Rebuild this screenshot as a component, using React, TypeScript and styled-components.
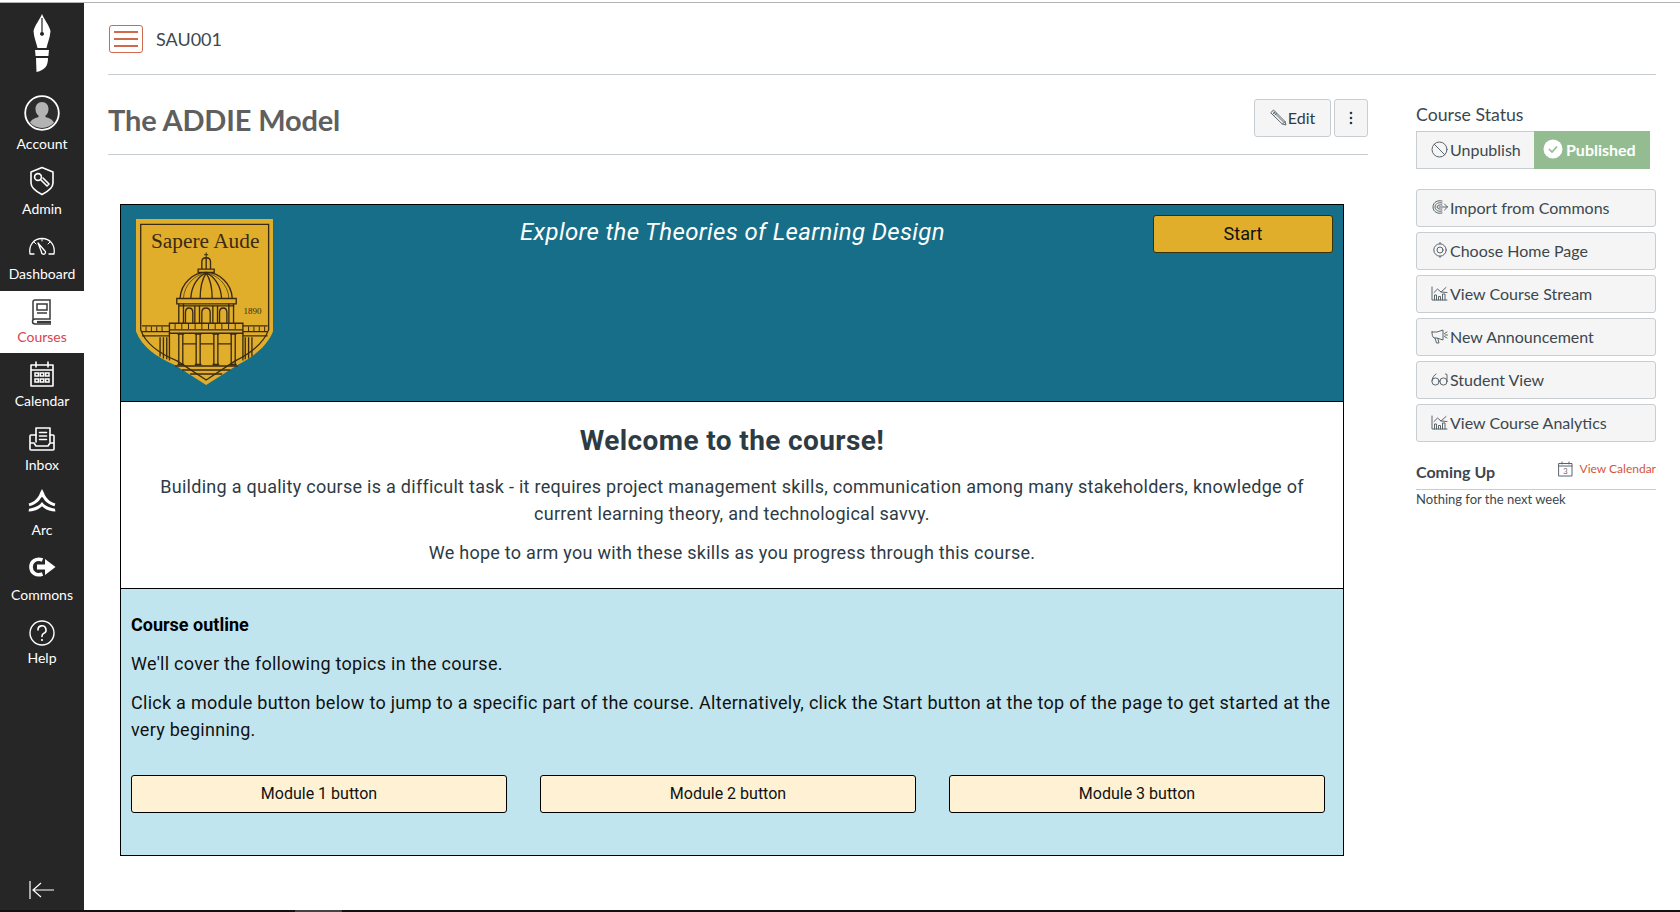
import React from "react";
import styled, { createGlobalStyle } from "styled-components";

const Global = createGlobalStyle`
  html, body { margin: 0; padding: 0; background: #fff; }
  body { font-family: "Lato", "Liberation Sans", sans-serif; color: #2d3b45; overflow: hidden; }
  * { box-sizing: border-box; }
`;

const Page = styled.div`
  width: 1680px; height: 912px; display: flex; flex-direction: column; overflow: hidden;
`;
const TopRule = styled.div`height: 3px; background: #fff; border-top: 1px solid #fff; border-bottom: 1px solid #b4b4b4;`;
const Row = styled.div`flex: 1; display: flex; min-height: 0;`;
const BottomRule = styled.div`
  height: 2px; background: #111; display: flex; padding-left: 295px;
`;
const BottomTab = styled.div`width: 47px; background: #444;`;

const Sidebar = styled.nav`
  width: 84px; background: #262626; display: flex; flex-direction: column; flex: none;
`;
const LogoBox = styled.div`height: 89px; display: flex; justify-content: center; padding-top: 11px;`;
const NavItem = styled.div<{ $h: number; $pad?: number; $active?: boolean }>`
  height: ${p => p.$h}px; display: flex; flex-direction: column; align-items: center;
  justify-content: flex-end; padding-bottom: ${p => p.$pad ?? 8}px;
  background: ${p => (p.$active ? "#fff" : "transparent")};
  color: ${p => (p.$active ? "#d9434e" : "#fff")};
  font-size: 14px; line-height: 17px;
`;
const NavIcon = styled.div<{ $gap?: number }>`
  display: flex; margin-bottom: ${p => p.$gap ?? 3}px;
`;
const CollapseBox = styled.div`margin-top: auto; display: flex; justify-content: center; padding-bottom: 11px;`;

const Main = styled.main`flex: 1; padding: 0 24px; min-width: 0;`;
const Header = styled.header`
  height: 72px; border-bottom: 1px solid #c7cdd1; display: flex; align-items: center; padding-left: 1px; gap: 13px;
`;
const Burger = styled.div`
  width: 34px; height: 28px; border: 1px solid #cf6a4f; border-radius: 3px;
  display: flex; flex-direction: column; justify-content: center; gap: 5px; padding: 0 4px;
`;
const BurgerBar = styled.span`height: 2px; background: #cf6a4f; display: block;`;
const Crumb = styled.span`font-size: 18px; color: #3c474e;`;

const Body = styled.div`display: flex; gap: 48px;`;
const Left = styled.div`width: 1260px; flex: none;`;
const Right = styled.aside`width: 240px; flex: none; padding-top: 27px;`;

const TitleRow = styled.div`
  height: 80px; border-bottom: 1px solid #c7cdd1; display: flex; align-items: center; justify-content: space-between;
`;
const Title = styled.h1`margin: 0; font-size: 29px; font-weight: 700; color: #5f5f5f; position: relative; top: 5px; letter-spacing: -0.15px;`;
const TitleActions = styled.div`display: flex; gap: 3px; position: relative; top: 3px;`;
const GhostBtn = styled.div<{ $w: number }>`
  width: ${p => p.$w}px; height: 38px; background: #f5f5f5; border: 1px solid #c7cdd1; border-radius: 3px;
  display: flex; align-items: center; justify-content: center; gap: 1px; font-size: 16px; color: #2d3b45;
`;

const Card = styled.section`margin: 49px 0 0 12px; width: 1224px; border: 1px solid #000; font-family: Roboto, "Liberation Sans", sans-serif;`;
const Banner = styled.div`
  height: 197px; background: #166e88; display: grid; grid-template-columns: 152px 1fr 192px;
  padding: 14px 10px 0 15px; border-bottom: 1px solid #000;
`;
const BannerTitle = styled.div`
  font-style: italic; font-size: 24px; color: #fff; text-align: center; line-height: 30px;
  padding-left: 36px; letter-spacing: 0.35px; white-space: nowrap; margin-top: -2px;
`;
const StartBtn = styled.div`
  height: 38px; width: 180px; background: #e0ae2b; border: 1px solid #3b3000; border-radius: 3px; margin: -4px 0 0 12px;
  display: flex; align-items: center; justify-content: center; font-size: 18px; color: #111; padding-bottom: 2px;
`;
const Welcome = styled.div`
  height: 187px; background: #fff; border-bottom: 1px solid #000; text-align: center; padding: 21px 20px 0; color: #2d3b45;
`;
const WelcomeTitle = styled.h2`margin: 0 0 14px; font-size: 28px; font-weight: 700; line-height: 36px; letter-spacing: 0.39px;`;
const Para = styled.p`margin: 0 0 12px; font-size: 18px; line-height: 27px; letter-spacing: 0.27px;`;
const Outline = styled.div`
  height: 266px; background: #c1e5ef; padding: 22px 10px 0; color: #111;
`;
const OutlineHead = styled.p`margin: 0 0 12px; font-size: 18px; line-height: 27px; font-weight: 700; color: #000;`;
const OutlinePara = styled.p`margin: 0 0 12px; font-size: 18px; line-height: 27px; letter-spacing: 0.27px;`;
const ModuleRow = styled.div`display: flex; gap: 33px; margin-top: 32px; padding-right: 8px;`;
const ModuleBtn = styled.div`
  flex: 1; height: 38px; background: #fff2d4; border: 1px solid #000; border-radius: 3px;
  display: flex; align-items: center; justify-content: center; font-size: 16px; color: #111; padding-bottom: 2px;
`;

const StatusLabel = styled.div`font-size: 17.7px; line-height: 26px; color: #3c474e; margin-bottom: 3px;`;
const StatusGroup = styled.div`display: flex; margin-bottom: 20px;`;
const Unpublish = styled.div`
  width: 118px; height: 38px; background: #f5f5f5; border: 1px solid #c7cdd1; border-right: none;
  display: flex; align-items: center; padding: 0 0 2px 14px; gap: 2px; font-size: 16px; color: #3c474e;
`;
const Published = styled.div`
  width: 116px; height: 38px; background: #93bd91; color: #fff; font-size: 16px; font-weight: 700;
  display: flex; align-items: center; padding: 0 0 2px 9px; gap: 3px;
`;
const SideBtn = styled.div`
  height: 38px; margin-bottom: 5px; background: #f5f5f5; border: 1px solid #c7cdd1; border-radius: 3px;
  display: flex; align-items: center; padding: 0 0 2px 14px; gap: 2px; font-size: 16px; color: #3c474e;
`;
const IconSlot = styled.span`width: 17px; display: flex; justify-content: center; flex: none;`;
const ComingRow = styled.div`
  display: flex; justify-content: space-between; align-items: flex-start; border-bottom: 1px solid #c7cdd1; height: 41px; padding-top: 13px; margin-top: 7px;
`;
const ComingTitle = styled.div`font-size: 16px; font-weight: 700; color: #3c474e; line-height: 20px;`;
const CalLink = styled.div`display: flex; align-items: center; gap: 7px; font-size: 12px; color: #d4553c; line-height: 16px; margin-top: -1px;`;
const Nothing = styled.div`font-size: 13px; color: #3c474e; line-height: 18px; margin-top: 0;`;

const I = styled.svg`display: block; flex: none;`;

const ic = { fill: "none", stroke: "#fff", strokeWidth: 1.6, strokeLinejoin: "round", strokeLinecap: "round" } as const;

const Logo = () => (
  <I width="20" height="58" viewBox="0 0 20 58">
    <path fill="#fff" fillRule="evenodd" d="M10 0 C12 5 17 11 18.5 17 C18 24 15.5 29 14.5 34 L5.5 34 C4.5 29 2 24 1.5 17 C3 11 8 5 10 0 Z M9.4 4 L9.4 18 A2 2 0 1 0 10.6 18 L10.6 4 Z" />
    <path fill="#fff" d="M3 36 H17 L16.4 42 H3.6 Z" />
    <path fill="#fff" d="M4 44 H16 C16 52 13 56 4.5 58 Z" />
  </I>
);
const Account = () => (
  <I width="36" height="36" viewBox="0 0 36 36">
    <circle cx="18" cy="18" r="16.8" fill="#2c2c2c" stroke="#fff" strokeWidth="1.8" />
    <path fill="#b3b3b3" d="M18 7 c4 0 6.5 3 6.5 7 c0 3-1.2 5.3-3 6.6 v1.4 c3 1 7 2.3 8.5 5.5 a15.8 15.8 0 0 1-24 0 c1.5-3.2 5.5-4.5 8.5-5.5 v-1.4 c-1.8-1.3-3-3.6-3-6.6 c0-4 2.5-7 6.5-7z" />
  </I>
);
const Admin = () => (
  <I width="26" height="30" viewBox="0 0 26 30">
    <path {...ic} d="M13 1.5 L24 6 V17 C24 22 18 26 13 28.5 C8 26 2 22 2 17 V6 Z" />
    <circle {...ic} cx="9" cy="11" r="3.4" />
    <path {...ic} d="M11.5 13.5 L18 20 M14 12 L20 18 L18 20" />
  </I>
);
const Dash = () => (
  <I width="28" height="18" viewBox="0 0 28 18">
    <path {...ic} strokeWidth="1.3" d="M6 17 H2 C.5 8 6 1.5 14 1.5 C22 1.5 27.5 8 26 17 H21" />
    <path {...ic} strokeWidth="1.3" d="M10 6 L13.5 15 A2 2 0 1 0 16.5 13.5 Z" />
    <path {...ic} d="M14 1.5 V4 M6 5 L8 7 M22 5 L20 7" strokeWidth="1" />
  </I>
);
const Book = () => (
  <I width="22" height="26" viewBox="0 0 22 26">
    <g fill="none" stroke="#3a3a3a" strokeWidth="1.5">
      <path d="M2 21 V3 A2 2 0 0 1 4 1 H19 V20 H4 A2.5 2.5 0 0 0 4 25 H20" />
      <rect x="6" y="5" width="10" height="6" />
      <path d="M6 14 H16" />
      <path d="M6 23 H20" strokeWidth="2.2" />
    </g>
  </I>
);
const Calendar = () => (
  <I width="24" height="26" viewBox="0 0 24 26">
    <path {...ic} d="M1 4 H23 V25 H1 Z M1 9 H23 M6 1 V6 M18 1 V6" />
    <path fill="none" stroke="#fff" strokeWidth="1.5" d="M5 12 h3.4 v3 h-3.4z M10.3 12 h3.4 v3 h-3.4z M15.6 12 h3.4 v3 h-3.4z M5 18 h3.4 v3 h-3.4z M10.3 18 h3.4 v3 h-3.4z M15.6 18 h3.4 v3 h-3.4z" />
  </I>
);
const Inbox = () => (
  <I width="26" height="24" viewBox="0 0 26 24">
    <path {...ic} d="M7 15 V1 H21 V15" />
    <path {...ic} d="M10.5 5.5 H17.5 M10.5 9 H17.5 M10.5 12.5 H17.5" />
    <path {...ic} d="M7 8 H2 A1 1 0 0 0 1 9 V22 A1 1 0 0 0 2 23 H24 A1 1 0 0 0 25 22 V9 A1 1 0 0 0 24 8 H21 M1 16 H5 L7 19 H19 L21 16 H25" />
  </I>
);
const Arc = () => (
  <I width="28" height="23" viewBox="0 0 28 24">
    <path fill="#fff" d="M14 0 L16 4 C17 7 19 10 21.5 12 C23.5 13.5 25.5 14.5 28 15 L27 18 C21 16.5 17 13 15.6 10 L14 8 L12.4 10 C11 13 7 16.5 1 18 L0 15 C2.5 14.5 4.5 13.5 6.5 12 C9 10 11 7 12 4 Z" />
    <path fill="#fff" d="M14 13.5 L16 16 C18.5 18.5 23 20 27.5 20.5 L28 23.5 C22 23.5 17 21 14 18 C11 21 6 23.5 0 23.5 L.5 20.5 C5 20 9.5 18.5 12 16 Z" />
  </I>
);
const Commons = () => (
  <I width="27" height="20" viewBox="0 0 27 20">
    <path fill="none" stroke="#fff" strokeWidth="3.6" d="M13.5 3 C7 .5 2 4.5 2 10 C2 15.5 7 19.5 13.5 17" />
    <path fill="#fff" d="M8 7.6 H16 V2 L26.5 10 L16 18 V12.4 H8 Z" />
  </I>
);
const Help = () => (
  <I width="26" height="26" viewBox="0 0 26 26">
    <circle {...ic} cx="13" cy="13" r="12" strokeWidth="1.4" />
    <path {...ic} d="M9 10 A4 4 0 1 1 14.5 13.5 C13.5 14 13 15 13 16.5" />
    <circle cx="13" cy="20" r="1.1" fill="#fff" />
  </I>
);
const Collapse = () => (
  <I width="26" height="18" viewBox="0 0 26 18">
    <path fill="none" stroke="#fff" strokeWidth="1.2" d="M1 0 V18 M25 9 H4 M12 2 L4 9 L12 16" />
  </I>
);

const sm = { fill: "none", stroke: "#59646b", strokeWidth: 1, strokeLinejoin: "round", strokeLinecap: "round" } as const;
const Pencil = () => (
  <I width="17" height="17" viewBox="0 0 17 17">
    <path {...sm} d="M1 3.5 L3.5 1 L15 12.5 L16 16 L12.5 15 Z M12.5 15 L15 12.5 M3 5 L5 3 M5 6 L6.5 4.5" />
    <path {...sm} d="M3.5 3 L14 13.5" />
  </I>
);
const Kebab = () => (
  <I width="4" height="14" viewBox="0 0 4 14">
    <circle cx="2" cy="2" r="1.3" fill="#2d3b45" /><circle cx="2" cy="7" r="1.3" fill="#2d3b45" /><circle cx="2" cy="12" r="1.3" fill="#2d3b45" />
  </I>
);
const Ban = () => (
  <I width="17" height="17" viewBox="0 0 17 17">
    <circle {...sm} cx="8.5" cy="8.5" r="7.5" /><path {...sm} d="M3.2 3.2 L13.8 13.8" />
  </I>
);
const Check = () => (
  <I width="20" height="20" viewBox="0 0 20 20">
    <circle cx="10" cy="10" r="9.5" fill="#fff" />
    <path fill="none" stroke="#93bd91" strokeWidth="1.6" d="M6 10 L9 13 L14 7.5" />
  </I>
);
const CommonsSm = () => (
  <I width="16" height="14" viewBox="0 0 16 14">
    <path {...sm} d="M10 1 C6 -.2 1 2 1 7 C1 12 6 14.2 10 13 M10 3 C7 2 3 3.5 3 7 C3 10.5 7 12 10 11 M10 5 C8.5 4.5 5 5 5 7 C5 9 8.5 9.5 10 9" />
    <path {...sm} d="M7 7 H15.5 M12.5 4 L15.5 7 L12.5 10" />
  </I>
);
const Home = () => (
  <I width="16" height="16" viewBox="0 0 16 16">
    <circle {...sm} cx="8" cy="8" r="6.2" /><circle {...sm} cx="8" cy="8" r="3" />
    <path {...sm} d="M8 .5 V2 M8 14 V15.5" />
  </I>
);
const Chart = () => (
  <I width="17" height="15" viewBox="0 0 17 15">
    <path {...sm} d="M1 1 V14 H16 M3.5 14 V9 H5.5 V14 M7.5 14 V10.5 H9.5 V14 M11.5 14 V8 H14 V14 M3 6.5 L6.5 3 L10 6 L15 1.5 M10 6 L16 6.5" />
  </I>
);
const Megaphone = () => (
  <I width="17" height="15" viewBox="0 0 17 15">
    <path {...sm} d="M1 3 H6 L12 1 V11 L6 9 H3 C1.5 8 1 6 1 3 Z M4 9 L5.5 14 H8 L6.8 9.5 M13.5 4.5 L16 3 M14 6 H16.5 M13.5 7.5 L16 9" />
  </I>
);
const Glasses = () => (
  <I width="17" height="13" viewBox="0 0 17 13">
    <circle {...sm} cx="4.5" cy="8.5" r="3.6" /><circle {...sm} cx="12.5" cy="8.5" r="3.6" />
    <path {...sm} d="M8 8 C8.3 7.6 8.7 7.6 9 8 M1 8 C1 5 3 2 5 1 M16 8 V1.5 L14.5 1" />
  </I>
);
const CalSm = () => (
  <I width="15" height="16" viewBox="0 0 15 16">
    <path {...sm} d="M1 2.5 H14 V15 H1 Z M1 5 H14 M4 1 V3 M11 1 V3" />
    <text x="7.5" y="13" textAnchor="middle" fontSize="7.5" fill="#59646b" fontFamily="Lato">3</text>
  </I>
);

const ink = "#3a2a14";
const Crest = () => (
  <I width="137" height="167" viewBox="48 58 410 500">
    <path fill="#e0ae2b" d="M48 58 H458 V395 C440 440 400 470 352 495 L258 555 L164 495 C106 470 66 440 48 395 Z" />
    <path fill="none" stroke={ink} strokeWidth="4" d="M62 74 H445 V390 C430 430 395 458 345 483 L258 540 L171 483 C111 458 76 430 62 390 Z" />
    <text x="255" y="145" textAnchor="middle" fontFamily="Liberation Serif" fontSize="64" fill={ink}>Sapere Aude</text>
    <text x="397" y="342" textAnchor="middle" fontFamily="Liberation Serif" fontSize="27" fill={ink}>1890</text>
    <g fill="none" stroke={ink} strokeWidth="4">
      <path d="M258 158 V175 M252 165 H264" strokeWidth="3" />
      <path d="M245 208 V186 C245 170 271 170 271 186 V208 M258 176 V208 M234 218 V208 H282 V218 Z" />
      <path d="M180 295 C182 250 220 218 258 218 C296 218 334 250 336 295" />
      <path d="M190 295 C192 255 225 224 258 220 C291 224 324 255 326 295" strokeWidth="2" />
      <path d="M212 295 C214 255 236 228 258 220 C280 228 302 255 304 295" />
      <path d="M240 295 C240 255 250 232 258 220 C266 232 276 255 276 295" />
      <path d="M170 296 H348 V312 H170 Z M176 318 H342" />
      <path d="M176 312 V372 M190 312 V372 M224 318 V372 M238 318 V372 M278 318 V372 M292 318 V372 M326 312 V372 M340 312 V372" />
      <path d="M196 372 V338 C196 320 218 320 218 338 V372 M245 372 V338 C245 320 270 320 270 338 V372 M298 372 V338 C298 320 320 320 320 338 V372" />
      <path d="M148 370 H368 V390 H148 Z M148 390 V400 H368 V390" />
      <path d="M165 372 V388 M185 372 V388 M205 372 V388 M225 372 V388 M245 372 V388 M265 372 V388 M285 372 V388 M305 372 V388 M325 372 V388 M345 372 V388" strokeWidth="3" />
      <path d="M66 378 H148 M66 395 H148 M368 378 H442 M368 395 H442 M66 408 H148 M368 408 H442" />
      <path d="M78 380 V394 M94 380 V394 M110 380 V394 M126 380 V394 M385 380 V394 M401 380 V394 M417 380 V394 M433 380 V394" strokeWidth="3" />
      <path d="M120 412 V470 M130 412 V476 M140 412 V478 M375 412 V478 M385 412 V476 M395 412 V470" />
      <path d="M172 402 H192 M224 402 H244 M277 402 H297 M329 402 H349 M172 494 H192 M224 494 H244 M277 494 H297 M329 494 H349" strokeWidth="5" />
      <path d="M176 402 V494 M188 402 V494 M228 402 V494 M240 402 V494 M281 402 V494 M293 402 V494 M333 402 V494 M345 402 V494" />
      <path d="M148 400 V482 M368 400 V482 M188 432 H228 M240 432 H281 M293 432 H333" />
      <path d="M165 498 H352 M186 510 H330 M210 522 H306" />
    </g>
  </I>
);

const nav: { label: string; h: number; pad?: number; icon: React.ReactNode; active?: boolean; gap?: number }[] = [
  { label: "Account", h: 68, icon: <Account />, gap: 4 },
  { label: "Admin", h: 65, icon: <Admin />, gap: 4 },
  { label: "Dashboard", h: 66, pad: 9, icon: <Dash />, gap: 10 },
  { label: "Courses", h: 62, pad: 8, icon: <Book />, active: true, gap: 3 },
  { label: "Calendar", h: 64, icon: <Calendar />, gap: 5 },
  { label: "Inbox", h: 64, icon: <Inbox />, gap: 5 },
  { label: "Arc", h: 65, icon: <Arc />, gap: 9 },
  { label: "Commons", h: 65, icon: <Commons />, gap: 9 },
  { label: "Help", h: 63, icon: <Help />, gap: 3 },
];

const sideButtons: { label: string; icon: React.ReactNode }[] = [
  { label: "Import from Commons", icon: <CommonsSm /> },
  { label: "Choose Home Page", icon: <Home /> },
  { label: "View Course Stream", icon: <Chart /> },
  { label: "New Announcement", icon: <Megaphone /> },
  { label: "Student View", icon: <Glasses /> },
  { label: "View Course Analytics", icon: <Chart /> },
];

export default function App() {
  return (
    <Page>
      <Global />
      <TopRule />
      <Row>
        <Sidebar>
          <LogoBox><Logo /></LogoBox>
          {nav.map(n => (
            <NavItem key={n.label} $h={n.h} $pad={n.pad} $active={n.active}>
              <NavIcon $gap={n.gap}>{n.icon}</NavIcon>
              {n.label}
            </NavItem>
          ))}
          <CollapseBox><Collapse /></CollapseBox>
        </Sidebar>
        <Main>
          <Header>
            <Burger><BurgerBar /><BurgerBar /><BurgerBar /></Burger>
            <Crumb>SAU001</Crumb>
          </Header>
          <Body>
            <Left>
              <TitleRow>
                <Title>The ADDIE Model</Title>
                <TitleActions>
                  <GhostBtn $w={77}><Pencil />Edit</GhostBtn>
                  <GhostBtn $w={34}><Kebab /></GhostBtn>
                </TitleActions>
              </TitleRow>
              <Card>
                <Banner>
                  <Crest />
                  <BannerTitle>Explore the Theories of Learning Design</BannerTitle>
                  <StartBtn>Start</StartBtn>
                </Banner>
                <Welcome>
                  <WelcomeTitle>Welcome to the course!</WelcomeTitle>
                  <Para>Building a quality course is a difficult task - it requires project management skills, communication among many stakeholders, knowledge of current learning theory, and technological savvy.</Para>
                  <Para>We hope to arm you with these skills as you progress through this course.</Para>
                </Welcome>
                <Outline>
                  <OutlineHead>Course outline</OutlineHead>
                  <OutlinePara>We'll cover the following topics in the course.</OutlinePara>
                  <OutlinePara>Click a module button below to jump to a specific part of the course. Alternatively, click the Start button at the top of the page to get started at the very beginning.</OutlinePara>
                  <ModuleRow>
                    <ModuleBtn>Module 1 button</ModuleBtn>
                    <ModuleBtn>Module 2 button</ModuleBtn>
                    <ModuleBtn>Module 3 button</ModuleBtn>
                  </ModuleRow>
                </Outline>
              </Card>
            </Left>
            <Right>
              <StatusLabel>Course Status</StatusLabel>
              <StatusGroup>
                <Unpublish><Ban />Unpublish</Unpublish>
                <Published><Check />Published</Published>
              </StatusGroup>
              {sideButtons.map(b => (
                <SideBtn key={b.label}><IconSlot>{b.icon}</IconSlot>{b.label}</SideBtn>
              ))}
              <ComingRow>
                <ComingTitle>Coming Up</ComingTitle>
                <CalLink><CalSm />View Calendar</CalLink>
              </ComingRow>
              <Nothing>Nothing for the next week</Nothing>
            </Right>
          </Body>
        </Main>
      </Row>
      <BottomRule><BottomTab /></BottomRule>
    </Page>
  );
}
